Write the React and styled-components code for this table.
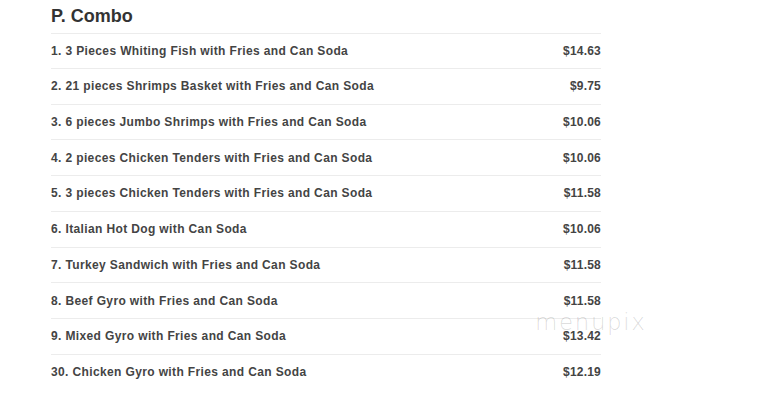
import React from "react";
import styled, { createGlobalStyle } from "styled-components";

const Global = createGlobalStyle`
  html, body { margin: 0; padding: 0; background: #fff; }
  body { font-family: "Liberation Sans", Arial, sans-serif; }
`;

const Page = styled.div`
  position: relative;
  width: 769px;
  height: 406px;
  overflow: hidden;
  background: #fff;
`;

const Section = styled.section`
  width: 550px;
  margin-left: 51px;
  padding-top: 5px;
`;

const Title = styled.h2`
  margin: 0;
  font-size: 18px;
  font-weight: bold;
  color: #333;
  line-height: 22px;
  height: 28px;
`;

const List = styled.ul`
  list-style: none;
  margin: 0;
  padding: 0;
`;

const Row = styled.li`
  display: flex;
  justify-content: space-between;
  align-items: center;
  height: 34.75px;
  padding-bottom: 0;
  border-top: 1px solid #ececec;
  font-size: 12px;
  font-weight: bold;
  color: #444;
  letter-spacing: 0.37px;
  line-height: 14px;
  &:first-child { height: 33.75px; }
`;

const Price = styled.span`
  color: #444;
  letter-spacing: 0.2px;
`;

const Watermark = styled.div`
  position: absolute;
  left: 535px;
  top: 309px;
  font-family: "DejaVu Sans", sans-serif;
  font-size: 23px;
  font-weight: 200;
  letter-spacing: 1.6px;
  color: rgba(0, 0, 0, 0.15);
  pointer-events: none;
`;

const items = [
  ["1. 3 Pieces Whiting Fish with Fries and Can Soda", "$14.63"],
  ["2. 21 pieces Shrimps Basket with Fries and Can Soda", "$9.75"],
  ["3. 6 pieces Jumbo Shrimps with Fries and Can Soda", "$10.06"],
  ["4. 2 pieces Chicken Tenders with Fries and Can Soda", "$10.06"],
  ["5. 3 pieces Chicken Tenders with Fries and Can Soda", "$11.58"],
  ["6. Italian Hot Dog with Can Soda", "$10.06"],
  ["7. Turkey Sandwich with Fries and Can Soda", "$11.58"],
  ["8. Beef Gyro with Fries and Can Soda", "$11.58"],
  ["9. Mixed Gyro with Fries and Can Soda", "$13.42"],
  ["30. Chicken Gyro with Fries and Can Soda", "$12.19"],
];

export default function App() {
  return (
    <Page>
      <Global />
      <Section>
        <Title>P. Combo</Title>
        <List>
          {items.map(([name, price]) => (
            <Row key={name}>
              <span>{name}</span>
              <Price>{price}</Price>
            </Row>
          ))}
        </List>
      </Section>
      <Watermark>menupix</Watermark>
    </Page>
  );
}
